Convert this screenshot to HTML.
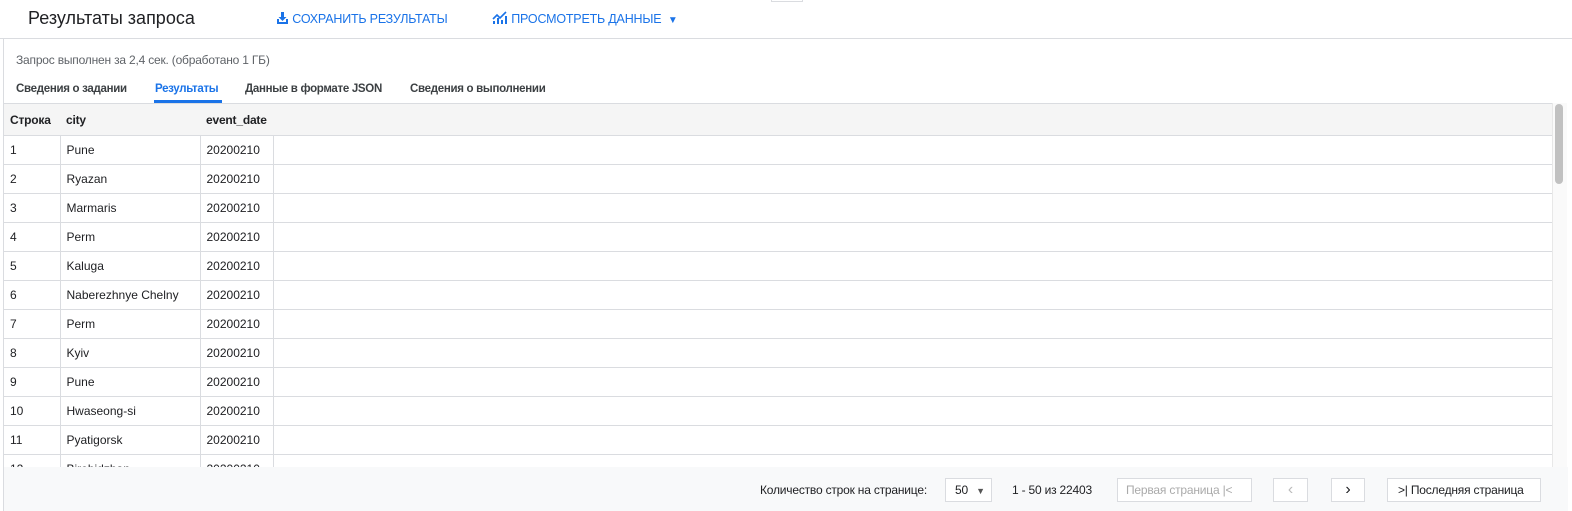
<!DOCTYPE html>
<html><head><meta charset="utf-8"><style>
*{box-sizing:border-box;margin:0;padding:0}
body{width:1572px;height:511px;overflow:hidden;background:#fff;font-family:"Liberation Sans",Arial,sans-serif;color:#202124;position:relative}
.top{position:absolute;left:0;top:0;width:1572px;height:39px;border-bottom:1px solid #dadce0}
.title{position:absolute;left:28px;top:8px;font-size:18px;color:#202124}
.btn{position:absolute;top:11px;font-size:12.5px;color:#1a73e8;letter-spacing:-0.2px}
.left{position:absolute;left:3px;top:39px;width:1px;height:472px;background:#dadce0}
.info{position:absolute;left:16px;top:53px;font-size:12px;color:#5f6368;letter-spacing:-0.2px}
.tab{position:absolute;top:83px;font-size:11.5px;color:#3c4043;font-weight:bold;letter-spacing:-0.3px}
.tab.a{color:#1a73e8}
.uline{position:absolute;left:154px;top:100px;width:68px;height:3px;background:#1a73e8}
table{position:absolute;left:4px;top:103px;border-collapse:collapse;font-size:12px;width:1548px}
td,th{height:29px;border-bottom:1px solid #dadce0;border-right:1px solid #dadce0;padding:0 6px;text-align:left;white-space:nowrap}
th{height:32px;background:#f5f5f5;font-weight:bold;border-right:none;border-top:1px solid #dadce0;letter-spacing:-0.2px}
td:last-child{border-right:none}
.foot{position:absolute;left:4px;top:467px;width:1564px;height:44px;background:#f8f9fa}
.f{position:absolute;font-size:12px;color:#202124;letter-spacing:-0.2px}
.box{position:absolute;border:1px solid #dadce0;background:#fff;height:24px;top:478px;font-size:12px;line-height:22px;letter-spacing:-0.2px;white-space:nowrap}
.sb{position:absolute;left:1552px;top:103px;width:15px;height:364px;background:#fafafa;border-left:1px solid #e8e8e8}
.th{position:absolute;left:1555px;top:104px;width:8px;height:80px;background:#c1c1c1;border-radius:4px}
</style></head><body>
<div class="top">
<div class="title">Результаты запроса</div>
<div class="btn" style="left:276px"><svg width="13" height="13" viewBox="0 0 13 13" style="vertical-align:-1px"><path d="M5 1h3v5h2.5L6.5 10 2.5 6H5z" fill="#1a73e8"/><rect x="1" y="11" width="11" height="2" fill="#1a73e8"/><rect x="1" y="8" width="2" height="4" fill="#1a73e8"/><rect x="10" y="8" width="2" height="4" fill="#1a73e8"/></svg> СОХРАНИТЬ РЕЗУЛЬТАТЫ</div>
<div class="btn" style="left:492px"><svg width="16" height="13" viewBox="0 0 16 13" style="vertical-align:-1px"><path d="M1 8l4-4 3 3 6-6" stroke="#1a73e8" stroke-width="1.6" fill="none"/><rect x="1" y="10" width="2" height="3" fill="#1a73e8"/><rect x="5" y="7" width="2" height="6" fill="#1a73e8"/><rect x="9" y="9" width="2" height="4" fill="#1a73e8"/><rect x="13" y="5" width="2" height="8" fill="#1a73e8"/></svg> ПРОСМОТРЕТЬ ДАННЫЕ &nbsp;<span style="font-size:10px">▼</span></div>
<div style="position:absolute;left:771px;top:0;width:32px;height:2px;border:1px solid #dadce0;border-top:none"></div>
</div>
<div class="left"></div>
<div class="info">Запрос выполнен за 2,4 сек. (обработано 1 ГБ)</div>
<div class="tab" style="left:16px">Сведения о задании</div>
<div class="tab a" style="left:155px">Результаты</div>
<div class="tab" style="left:245px">Данные в формате JSON</div>
<div class="tab" style="left:410px">Сведения о выполнении</div>
<div class="uline"></div>
<table>
<tr><th style="width:56px">Строка</th><th style="width:140px">city</th><th style="width:73px">event_date</th><th></th></tr>
<tr><td>1</td><td>Pune</td><td>20200210</td><td></td></tr>
<tr><td>2</td><td>Ryazan</td><td>20200210</td><td></td></tr>
<tr><td>3</td><td>Marmaris</td><td>20200210</td><td></td></tr>
<tr><td>4</td><td>Perm</td><td>20200210</td><td></td></tr>
<tr><td>5</td><td>Kaluga</td><td>20200210</td><td></td></tr>
<tr><td>6</td><td>Naberezhnye Chelny</td><td>20200210</td><td></td></tr>
<tr><td>7</td><td>Perm</td><td>20200210</td><td></td></tr>
<tr><td>8</td><td>Kyiv</td><td>20200210</td><td></td></tr>
<tr><td>9</td><td>Pune</td><td>20200210</td><td></td></tr>
<tr><td>10</td><td>Hwaseong-si</td><td>20200210</td><td></td></tr>
<tr><td>11</td><td>Pyatigorsk</td><td>20200210</td><td></td></tr>
<tr><td>12</td><td>Birobidzhan</td><td>20200210</td><td></td></tr>
</table>
<div class="sb"></div><div class="th"></div>
<div class="foot"></div>
<div class="f" style="left:760px;top:483px">Количество строк на странице:</div>
<div class="box" style="left:945px;width:47px;padding-left:9px">50 <span style="font-size:9px;margin-left:5px;color:#555">▼</span></div>
<div class="f" style="left:1012px;top:483px">1 - 50 из 22403</div>
<div class="box" style="left:1117px;width:135px;padding-left:8px;color:#aaa">Первая страница |&lt;</div>
<div class="box" style="left:1273px;width:35px;text-align:center;color:#bbb;font-size:16px">‹</div>
<div class="box" style="left:1331px;width:34px;text-align:center;font-size:16px">›</div>
<div class="box" style="left:1387px;width:154px;padding-left:10px">&gt;| Последняя страница</div>
</body></html>
